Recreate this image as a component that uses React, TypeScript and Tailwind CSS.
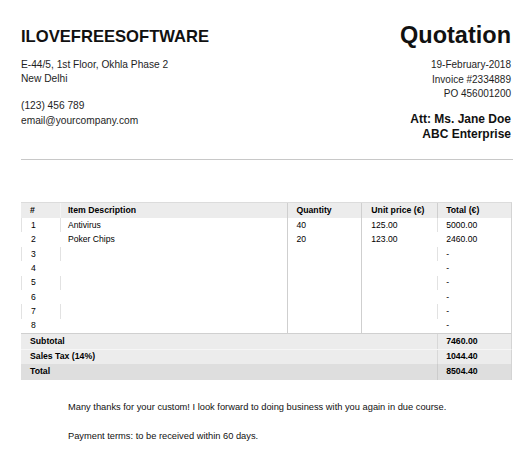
import React from "react";

const rows = [
  { n: "1", d: "Antivirus", q: "40", u: "125.00", t: "5000.00" },
  { n: "2", d: "Poker Chips", q: "20", u: "123.00", t: "2460.00" },
  { n: "3", d: "", q: "", u: "", t: "-" },
  { n: "4", d: "", q: "", u: "", t: "-" },
  { n: "5", d: "", q: "", u: "", t: "-" },
  { n: "6", d: "", q: "", u: "", t: "-" },
  { n: "7", d: "", q: "", u: "", t: "-" },
  { n: "8", d: "", q: "", u: "", t: "-" },
];

export default function App() {
  return (
    <div
      className="w-[530px] h-[458px] bg-white text-[#1a1a1a] pl-[21px] pr-[17px] pt-[20px] overflow-hidden"
      style={{ fontFamily: '"Liberation Sans", Arial, sans-serif' }}
    >
      {/* Header */}
      <div className="flex justify-between items-start">
        <div className="pt-[7px]">
          <div className="text-[16.6px] leading-[20px] font-bold text-[#111]">ILOVEFREESOFTWARE</div>
          <div className="mt-[10.5px] text-[10.2px] leading-[14.5px] text-[#1e1e1e]">
            <div>E-44/5, 1st Floor, Okhla Phase 2</div>
            <div>New Delhi</div>
          </div>
          <div className="mt-[12.5px] text-[10.2px] leading-[14.5px] text-[#1e1e1e]">
            <div>(123) 456 789</div>
            <div>email@yourcompany.com</div>
          </div>
        </div>
        <div className="pt-[1px] pr-[2px] text-right">
          <div className="text-[23.5px] leading-[28px] font-bold text-[#111]">Quotation</div>
          <div className="mt-[9px] text-[10px] leading-[14.5px] text-[#1e1e1e]">
            <div>19-February-2018</div>
            <div>Invoice #2334889</div>
            <div>PO 456001200</div>
          </div>
          <div className="mt-[10px] text-[12px] leading-[15.5px] font-bold text-[#111]">
            <div>Att: Ms. Jane Doe</div>
            <div>ABC Enterprise</div>
          </div>
        </div>
      </div>

      {/* Divider */}
      <div className="mt-[16px] h-[1.5px] w-[492px] bg-[#c8c8c8]" />

      {/* Table */}
      <div className="mt-[42px] w-[491px] text-[8.6px] text-[#000]">
        <div className="flex h-[16px] bg-[#ececec] border-t border-[#dcdcdc] font-bold text-[8.7px] border-r border-r-[#d4d4d4]">
          <div className="w-[39px] pl-[9px] flex items-center">#</div>
          <div className="w-[228px] pl-[7px] flex items-center border-l border-[#f4f4f4]">Item Description</div>
          <div className="w-[74px] pl-[8px] flex items-center border-l border-[#cfcfcf]">Quantity</div>
          <div className="w-[76px] pl-[9px] flex items-center border-l border-[#cfcfcf]">Unit price (€)</div>
          <div className="w-[74px] pl-[8px] flex items-center border-l border-[#cfcfcf]">Total (€)</div>
        </div>
        {rows.map((r, i) => (
          <div key={r.n} className="flex h-[14.4px] border-r border-[#d4d4d4]">
            <div
              className={
                "w-[39px] pl-[9px] flex items-center border-l " +
                (i % 2 === 0 ? "border-[#e2e2e2]" : "border-transparent")
              }
            >
              {r.n}
            </div>
            <div
              className={
                "w-[228px] pl-[7px] flex items-center border-l " +
                (i % 2 === 0 ? "border-[#e2e2e2]" : "border-transparent")
              }
            >
              {r.d}
            </div>
            <div className="w-[74px] pl-[8px] flex items-center border-l border-[#cfcfcf]">{r.q}</div>
            <div className="w-[76px] pl-[9px] flex items-center border-l border-[#cfcfcf]">{r.u}</div>
            <div
              className={
                "w-[74px] pl-[8px] flex items-center border-l " +
                (i % 2 === 0 ? "border-[#e2e2e2]" : "border-transparent")
              }
            >
              {r.t}
            </div>
          </div>
        ))}
        <div className="flex h-[15.5px] bg-[#ececec] border-t border-[#d0d0d0] font-bold text-[8.7px] border-r border-r-[#d4d4d4]">
          <div className="w-[417px] pl-[9px] flex items-center">Subtotal</div>
          <div className="w-[74px] pl-[8px] flex items-center border-l border-[#d8d8d8]">7460.00</div>
        </div>
        <div className="flex h-[15.5px] bg-[#ececec] border-t border-[#f6f6f6] font-bold text-[8.7px] border-r border-r-[#d4d4d4]">
          <div className="w-[417px] pl-[9px] flex items-center">Sales Tax (14%)</div>
          <div className="w-[74px] pl-[8px] flex items-center border-l border-[#d8d8d8]">1044.40</div>
        </div>
        <div className="flex h-[15.5px] bg-[#dedede] font-bold text-[8.7px] border-r border-[#d4d4d4]">
          <div className="w-[417px] pl-[9px] flex items-center">Total</div>
          <div className="w-[74px] pl-[8px] flex items-center border-l border-[#cccccc]">8504.40</div>
        </div>
      </div>

      {/* Footer */}
      <div className="pl-[47px] text-[9.3px] leading-[14px] text-[#111]">
        <div className="mt-[20.5px]">
          Many thanks for your custom! I look forward to doing business with you again in due course.
        </div>
        <div className="mt-[14.5px]">Payment terms: to be received within 60 days.</div>
      </div>
    </div>
  );
}
